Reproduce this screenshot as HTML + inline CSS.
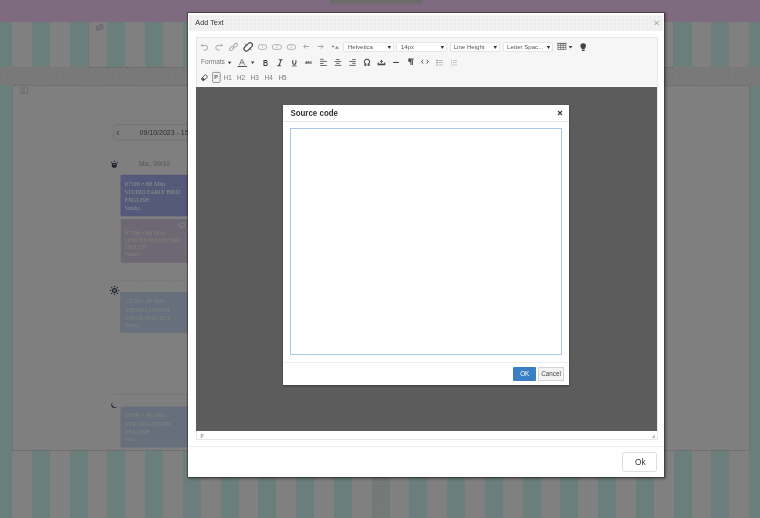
<!DOCTYPE html>
<html><head><meta charset="utf-8">
<style>
*{margin:0;padding:0;box-sizing:border-box}
html,body{width:760px;height:518px;overflow:hidden;background:#808080;font-family:"Liberation Sans",sans-serif}
.a{position:absolute}
svg.full{position:absolute;left:0;top:0;width:760px;height:518px;will-change:transform}
#stripes{left:0;top:0;width:760px;height:518px;background:repeating-linear-gradient(90deg,#6a7f7c -5.75px,#6a7f7c 12.25px,#808080 12.25px,#808080 32px)}
#purple{left:0;top:0;width:760px;height:22px;background:#7e6b7f}
#band{left:0;top:67px;width:760px;height:18px;background-color:#7a7a7a;background-image:radial-gradient(circle at 1px 1px,#6d6d6d 0.5px,transparent 0.8px),radial-gradient(circle at 1px 1px,#6d6d6d 0.5px,transparent 0.8px);background-size:7px 5px;background-position:0 1px,3.5px 3.5px}
#toppanel{left:88px;top:22px;width:586px;height:45.5px;border-left:1px solid #747474;border-right:1px solid #747474;border-bottom:1px solid #6e6e6e}
#panel{left:11.5px;top:84.5px;width:738.5px;height:366px;background:#7f7f7f;border:1px solid #707070}
/* modal */
#modal{left:188.3px;top:13.3px;width:476px;height:463.7px;background:#fff;box-shadow:0 0 0 1px rgba(40,40,40,.45),1px 1px 2.4px 1px rgba(20,20,20,.42)}
#mhead{left:189px;top:14.6px;width:474px;height:16.4px;background-color:#f1f1f1;background-image:radial-gradient(circle at 1px 1px,#e2e2e2 0.5px,transparent 0.8px);background-size:4px 3.7px;background-position:1px 0.5px}
#editor{left:195.5px;top:37.2px;width:462.5px;height:402.6px;border:1px solid #e6e6e6;background:#fff}
#toolbar{left:196.5px;top:38.2px;width:460.5px;height:48.8px;background:#f5f6f5}
#content{left:196px;top:87px;width:461px;height:343.8px;background:#5c5c5c}
#mfoot{left:189px;top:446px;width:475px;height:1px;background:#ececec}
#okbtn{left:622.3px;top:452px;width:35.2px;height:20.2px;border:1px solid #dedede;border-radius:2.5px;background:#fff}
.sel{background:#fff;border:1px solid #e6e6e6;border-radius:1px}
/* source dialog */
#sc{left:283px;top:105px;width:286px;height:280px;background:#fff;box-shadow:0 1px 2px rgba(0,0,0,.35)}
#scsep{left:283px;top:121px;width:286px;height:1px;background:#e8e8e8}
#ta{left:290px;top:128.3px;width:272px;height:227px;border:1px solid #a9c8e8}
#scsep2{left:283px;top:361.5px;width:286px;height:1px;background:#eee}
#ok2{left:513.1px;top:367px;width:23.1px;height:13.6px;background:#3a7fc3;border-radius:1px}
#cancel{left:538.3px;top:367px;width:25.7px;height:14px;background:#f3f3f3;border:1px solid #d4d4d4}
</style></head><body>
<div id="stripes" class="a"></div>
<div id="purple" class="a"></div>
<div id="band" class="a"></div>
<div id="toppanel" class="a"></div>
<div id="panel" class="a"></div>
<div class="a" style="left:372px;top:476px;width:18px;height:42px;background-color:#767b7a;background-image:radial-gradient(circle at 1px 1px,#6c7170 0.5px,transparent 0.8px);background-size:3px 3px"></div>

<!-- page content under modal -->
<svg class="full" viewBox="0 0 760 518">
  <rect x="330" y="0" width="93" height="2.6" fill="#6a6a6b"/>
  <rect x="331" y="2.6" width="91" height="2" fill="#6a6a6b" opacity=".45"/>
  <!-- date nav -->
  <rect x="113.5" y="124.5" width="90" height="15.3" rx="2" fill="#7f7f7f" stroke="#757575" stroke-width="1"/>
  <path d="M119 130.8 L116.8 132.8 L119 134.8" fill="none" stroke="#333" stroke-width="0.9"/>
  <text x="139.6" y="134.9" font-size="7" fill="#2e2e2e">09/10/2023 - 15/10/2023</text>
  <!-- Mo. -->
  <text x="139.1" y="166.1" font-size="6.5" fill="#545454">Mo., 09/10</text>
  <!-- bulb icon -->
  <g fill="#1e2230">
    <path d="M111.9 163.6 a.6 .6 0 0 1 .6 -.6 h3.7 a.6 .6 0 0 1 .6 .6 v2.2 a2 2 0 0 1 -2 2 h-1 a2 2 0 0 1 -2 -2z"/>
    <circle cx="114.4" cy="161.3" r=".7"/><circle cx="111.5" cy="162.3" r=".65"/><circle cx="117.4" cy="162.3" r=".65"/>
  </g>
  <rect x="113" y="164.1" width="2.6" height=".7" rx=".3" fill="#7a7a7a"/>
  <!-- cards -->
  <rect x="120.5" y="174.8" width="70" height="41.5" rx="1.5" fill="#55597a"/>
  <g font-family="Liberation Serif,serif" font-size="6.3" fill="#8e9889">
    <text x="124.8" y="185.7" textLength="40.3" lengthAdjust="spacingAndGlyphs">07:00 • 60 Min</text>
    <text x="124.8" y="193.7" textLength="55.1" lengthAdjust="spacingAndGlyphs">STUDIO EARLY BIRD</text>
    <text x="124.8" y="202" textLength="24.2" lengthAdjust="spacingAndGlyphs">ENGLISH</text>
    <text x="124.8" y="209.6" font-size="5.3" textLength="15" lengthAdjust="spacingAndGlyphs">Sandra</text>
  </g>
  <rect x="120.8" y="218.9" width="70" height="43.8" rx="1.5" fill="#6d6874"/>
  <g font-family="Liberation Serif,serif" font-size="6.3" fill="#7f8578">
    <text x="124.9" y="235" textLength="40.2" lengthAdjust="spacingAndGlyphs">07:00 • 60 Min</text>
    <text x="124.9" y="242.4" textLength="56.1" lengthAdjust="spacingAndGlyphs">LIVESTREAM EARLY BIRD</text>
    <text x="124.9" y="249.3" textLength="20.9" lengthAdjust="spacingAndGlyphs">ENGLISH</text>
    <text x="124.9" y="256.2" font-size="5.3" textLength="14.9" lengthAdjust="spacingAndGlyphs">Sandra</text>
  </g>
  <rect x="178.8" y="223.2" width="5.8" height="3.6" rx=".5" fill="none" stroke="#858585" stroke-width="0.7"/>
  <rect x="180.5" y="227.2" width="2.4" height=".6" fill="#858585"/>
  <!-- separators -->
  <line x1="113" y1="280.2" x2="190" y2="280.2" stroke="#727272" stroke-width="0.8" stroke-dasharray="1 .7"/>
  <line x1="113" y1="394.4" x2="190" y2="394.4" stroke="#727272" stroke-width="0.8"/>
  <!-- sun -->
  <circle cx="114.5" cy="290.5" r="1.9" fill="none" stroke="#1e2230" stroke-width="1.25"/>
  <g fill="#1e2230">
    <circle cx="114.5" cy="286.5" r=".7"/><circle cx="114.5" cy="294.5" r=".7"/>
    <circle cx="110.5" cy="290.5" r=".7"/><circle cx="118.5" cy="290.5" r=".7"/>
    <circle cx="111.6" cy="287.6" r=".7"/><circle cx="117.4" cy="287.6" r=".7"/>
    <circle cx="111.6" cy="293.4" r=".7"/><circle cx="117.4" cy="293.4" r=".7"/>
  </g>
  <rect x="120.2" y="292" width="70" height="40.8" rx="1.5" fill="#686f7c"/>
  <g font-family="Liberation Serif,serif" font-size="6.3" fill="#7e857e">
    <text x="125.1" y="302.6" textLength="40" lengthAdjust="spacingAndGlyphs">12:30 • 60 Min</text>
    <text x="125.1" y="311.5" textLength="44.2" lengthAdjust="spacingAndGlyphs">STUDIO LUNCH</text>
    <text x="125.1" y="319.6" textLength="45.5" lengthAdjust="spacingAndGlyphs">BREAK PRACTICE</text>
    <text x="125.1" y="326.5" font-size="5.3" textLength="13.8" lengthAdjust="spacingAndGlyphs">Selina</text>
  </g>
  <!-- moon -->
  <path d="M113.2 401.9 a3.2 3.2 0 1 0 4.1 4.4 a2.6 2.6 0 0 1 -4.1 -4.4z" fill="#1e2230"/>
  <rect x="120.5" y="406.5" width="70" height="41" rx="1.5" fill="#686f7c"/>
  <g font-family="Liberation Serif,serif" font-size="6.3" fill="#7e857e">
    <text x="125.3" y="417.2" textLength="39.8" lengthAdjust="spacingAndGlyphs">18:00 • 90 Min</text>
    <text x="125.3" y="425.5" textLength="45.5" lengthAdjust="spacingAndGlyphs">STUDIO OPEN90</text>
    <text x="125.3" y="433.8" textLength="24" lengthAdjust="spacingAndGlyphs">ENGLISH</text>
    <text x="125.3" y="441" font-size="5.3" textLength="9.4" lengthAdjust="spacingAndGlyphs">Vera</text>
  </g>
  <!-- small edit icons -->
  <g fill="none" stroke="#6a6a6a" stroke-width="0.8">
    <rect x="96.3" y="25.4" width="6.6" height="3.8" rx="1" transform="rotate(-25 99.6 27.3)" stroke="#625c66" stroke-width="0.9"/><path d="M97.8 28.3 l3.6 -1.8" stroke="#625c66" stroke-width="0.7"/>
    <path d="M20.8 87.8 v5.5 h2.5 v-5.5z M24 88.5 a2 2 0 0 1 3.5 0 v4.5 h-3.5z"/>
  </g>
</svg>

<div id="modal" class="a"></div>
<div id="mhead" class="a"></div>
<div id="editor" class="a"></div>
<div id="toolbar" class="a"></div>
<div id="content" class="a"></div>
<div class="a" style="left:196.5px;top:86px;width:460.5px;height:1px;background:#fbfbfb"></div>
<div id="mfoot" class="a"></div>
<div id="okbtn" class="a"></div>
<div class="a sel" style="left:343.3px;top:41.5px;width:50.8px;height:10.9px"></div>
<div class="a sel" style="left:396.4px;top:41.5px;width:50.6px;height:10.9px"></div>
<div class="a sel" style="left:449.5px;top:41.5px;width:50.5px;height:10.9px"></div>
<div class="a sel" style="left:502.5px;top:41.5px;width:50.8px;height:10.9px"></div>

<svg class="full" viewBox="0 0 760 518">
  <text x="195.3" y="24.9" font-size="7.3" fill="#333">Add Text</text>
  <path d="M654.3 20.8 l4.4 4.4 M658.7 20.8 l-4.4 4.4" stroke="#9a9a9a" stroke-width="1"/>
  <!-- row1 icons -->
  <g fill="none" stroke="#a3a3a3" stroke-width="0.95">
    <path d="M201.8 45.4 H205.3 A2.3 2.3 0 0 1 205.3 50 H203.6"/>
    <path d="M221.6 45.4 H218.1 A2.3 2.3 0 0 0 218.1 50 H219.8"/>
    <ellipse cx="231.5" cy="48.6" rx="1.45" ry="2.3" transform="rotate(45 231.5 48.6)"/>
    <ellipse cx="235.5" cy="45.2" rx="1.45" ry="2.3" transform="rotate(45 235.5 45.2)"/>
    <rect x="258.3" y="44.7" width="8.4" height="4.7" rx="2.35" stroke-width="0.8"/>
    <rect x="272.3" y="44.7" width="9.2" height="4.7" rx="2.35" stroke-width="0.8"/>
    <rect x="287.2" y="44.7" width="8.4" height="4.7" rx="2.35" stroke-width="0.8"/>
    <path d="M303.8 46.5 h5.2 M305.7 44.5 l-2 2 l2 2"/>
    <path d="M323 46.5 h-5.2 M321.1 44.5 l2 2 l-2 2"/>
  </g>
  <path d="M200.6 45.4 l1.9 -1.5 v3z M222.8 45.4 l-1.9 -1.5 v3z" fill="#a3a3a3"/>
  <g font-size="3.2" fill="#aaa" text-anchor="middle">
    <text x="262.5" y="48.3">1</text><text x="276.9" y="48.3">2</text><text x="291.4" y="48.3">3</text>
  </g>
  <path d="M244.3 43.4 l3.4 1.3 l-2.1 2.1z M252 50.4 l-3.4 -1.3 l2.1 -2.1z" fill="#a0a0a0"/>
  <rect x="243.2" y="44.6" width="10" height="4.6" rx="2.3" transform="rotate(-45 248.2 46.9)" fill="#fff" stroke="#474747" stroke-width="1.2"/>
  <path d="M331.3 45.7 h3.5 l-1.75 2.1z" fill="#888"/>
  <path d="M334.9 48.7 l2 -2.6 l2 2.6z" fill="#8a8a8a"/>
  <!-- selects -->
  <g font-size="6.1" fill="#595959">
    <text x="347.9" y="49.3">Helvetica</text>
    <text x="400.8" y="49.3">14px</text>
    <text x="453.7" y="49.3">Line Height</text>
    <text x="507" y="49.3">Letter Spac...</text>
  </g>
  <g fill="#333">
    <path d="M387.6 46.1 h3.5 l-1.75 2.8z"/>
    <path d="M440.6 46.1 h3.5 l-1.75 2.8z"/>
    <path d="M493.5 46.1 h3.5 l-1.75 2.8z"/>
    <path d="M546.7 46.1 h3.5 l-1.75 2.8z"/>
    <path d="M568.8 46 h3.5 l-1.75 2.4z"/>
    <path d="M227.9 61.7 h3.4 l-1.7 2.3z"/>
    <path d="M251 61.6 h3.3 l-1.65 2.3z"/>
  </g>
  <!-- table icon -->
  <g fill="none" stroke="#6a6a6a" stroke-width="0.75">
    <rect x="557.9" y="43.4" width="8" height="6.1"/>
    <path d="M557.9 45.5 h8 M557.9 47.5 h8 M560.6 43.4 v6.1 M563.2 43.4 v6.1"/>
  </g>
  <rect x="557.5" y="42.9" width="8.8" height="1.2" fill="#666"/>
  <!-- bulb -->
  <path d="M583.2 43.2 a2.8 2.8 0 0 1 2.8 2.8 c0 1.3 -1 1.9 -1.3 3 h-3 c-0.3 -1.1 -1.3 -1.7 -1.3 -3 a2.8 2.8 0 0 1 2.8 -2.8z" fill="#444"/>
  <rect x="581.8" y="49.6" width="2.8" height="1.3" rx=".5" fill="#3f4a5a"/>
  <!-- row2 -->
  <text x="201" y="64" font-size="6.5" fill="#777">Formats</text>
  <path d="M239.4 64.9 l2.3 -5.3 h0.6 l2.3 5.3 M240.4 62.9 h3.2" fill="none" stroke="#555" stroke-width="0.75"/>
  <rect x="237.6" y="65.9" width="9.3" height="1" fill="#444"/>
  <text x="263.1" y="65.9" font-size="8.6" font-weight="bold" fill="#444" textLength="5.1" lengthAdjust="spacingAndGlyphs">B</text>
  <path d="M278.8 59.8 h3.6 M277.3 65.8 h3.6 M281 59.8 l-1.9 6" fill="none" stroke="#444" stroke-width="1.1"/>
  <path d="M292.7 60.2 v2.6 a1.6 1.6 0 0 0 3.2 0 v-2.6" fill="none" stroke="#444" stroke-width="1.1"/>
  <rect x="292" y="65.5" width="4.6" height=".8" fill="#444"/>
  <text x="305.2" y="63.9" font-size="3.3" font-weight="bold" fill="#555" textLength="6.8" lengthAdjust="spacingAndGlyphs">ABC</text>
  <rect x="305" y="62.4" width="7.2" height=".45" fill="#555"/>
  <g stroke="#555" stroke-width="0.85">
    <path d="M320.1 59.3 h3.5 M320.1 61.4 h6.7 M320.1 63.5 h3.5 M320.1 65.5 h6.7"/>
    <path d="M336.2 59.5 h3.3 M334.6 61.5 h6.6 M336.2 63.4 h3.3 M334.6 65.4 h6.6"/>
    <path d="M352.2 59.5 h3.5 M349.3 61.5 h6.4 M352.2 63.4 h3.5 M349.3 65.4 h6.4"/>
  </g>
  <path d="M364 65.1 h1.9 v-0.9 a2.6 2.6 0 1 1 2.2 0 v0.9 h1.9" fill="none" stroke="#444" stroke-width="1.05"/>
  <!-- insert -->
  <path d="M378.2 62.4 v2.3 h6.5 v-2.3" fill="none" stroke="#444" stroke-width="1.1"/>
  <rect x="378.2" y="63.6" width="6.5" height="1.3" fill="#444"/>
  <path d="M381.45 63 v-3.2 M380 61.4 h2.9" fill="none" stroke="#444" stroke-width="0.9"/>
  <rect x="393.2" y="61.9" width="5.7" height="1.1" fill="#444"/>
  <path d="M410 58.4 h3.6 v1 h-0.7 v5.6 h-1 v-5.6 h-0.5 v5.6 h-1 v-2.7 a2.15 2.15 0 0 1 -0.4 -4.3z" fill="#505050"/>
  <path d="M423.1 59.9 l-1.5 1.8 l1.5 1.8 M426.7 59.9 l1.5 1.8 l-1.5 1.8" fill="none" stroke="#444" stroke-width="0.95"/>
  <g fill="#444">
    <circle cx="437" cy="60.4" r=".6"/><circle cx="437" cy="62.7" r=".6"/><circle cx="437" cy="65" r=".6"/>
  </g>
  <g fill="#999">
    <rect x="438.6" y="60.1" width="4.3" height=".6"/><rect x="438.6" y="62.4" width="4.3" height=".6"/><rect x="438.6" y="64.7" width="4.3" height=".6"/>
  </g>
  <g fill="#aaa">
    <rect x="451" y="59.8" width=".6" height="1.6"/><rect x="451" y="62" width=".6" height="1.6"/><rect x="451" y="64.3" width=".6" height="1.4"/>
    <rect x="452.8" y="60.1" width="4.3" height=".6"/><rect x="452.8" y="62.4" width="4.3" height=".6"/><rect x="452.8" y="64.7" width="4.3" height=".6"/>
  </g>
  <!-- row3 -->
  <rect x="201.2" y="76.2" width="6.4" height="3.2" rx="1.5" transform="rotate(-45 204.4 77.8)" fill="#fff" stroke="#333" stroke-width="0.85"/>
  <path d="M201.8 79 l1.4 -1.4 l1.7 1.7 l-0.8 0.8 a1 1 0 0 1 -1.4 0z" fill="#444"/>
  <rect x="212.6" y="72.4" width="7.6" height="10" rx="1" fill="none" stroke="#7a7a7a" stroke-width="0.8"/>
  <text x="214.3" y="79.1" font-size="5.4" font-weight="bold" fill="#555">P</text>
  <g font-size="6.3" fill="#777">
    <text x="223.8" y="79.6">H1</text>
    <text x="236.9" y="79.6">H2</text>
    <text x="250.8" y="79.6">H3</text>
    <text x="264.6" y="79.6">H4</text>
    <text x="278.5" y="79.6">H5</text>
  </g>
  <!-- status bar -->
  <text x="200.4" y="436.8" font-size="5.6" fill="#666">p</text>
  <path d="M651.5 438 l3.5 -3.5 v3.5z" fill="#bbb"/>
  <text x="635" y="465.1" font-size="8.3" fill="#333">Ok</text>
</svg>

<div id="sc" class="a"></div>
<div id="scsep" class="a"></div>
<div id="ta" class="a"></div>
<div id="scsep2" class="a"></div>
<div id="ok2" class="a"></div>
<div id="cancel" class="a"></div>
<svg class="full" viewBox="0 0 760 518">
  <text x="290.4" y="116.2" font-size="8.6" font-weight="bold" fill="#333" textLength="47.6" lengthAdjust="spacingAndGlyphs">Source code</text>
  <path d="M558 111 l4 4 M562 111 l-4 4" stroke="#3a3a3a" stroke-width="1.15"/>
  <text x="524.7" y="376.3" font-size="6.3" fill="#fff" text-anchor="middle">OK</text>
  <text x="541.2" y="376.4" font-size="6.3" fill="#444">Cancel</text>
</svg>
</body></html>
